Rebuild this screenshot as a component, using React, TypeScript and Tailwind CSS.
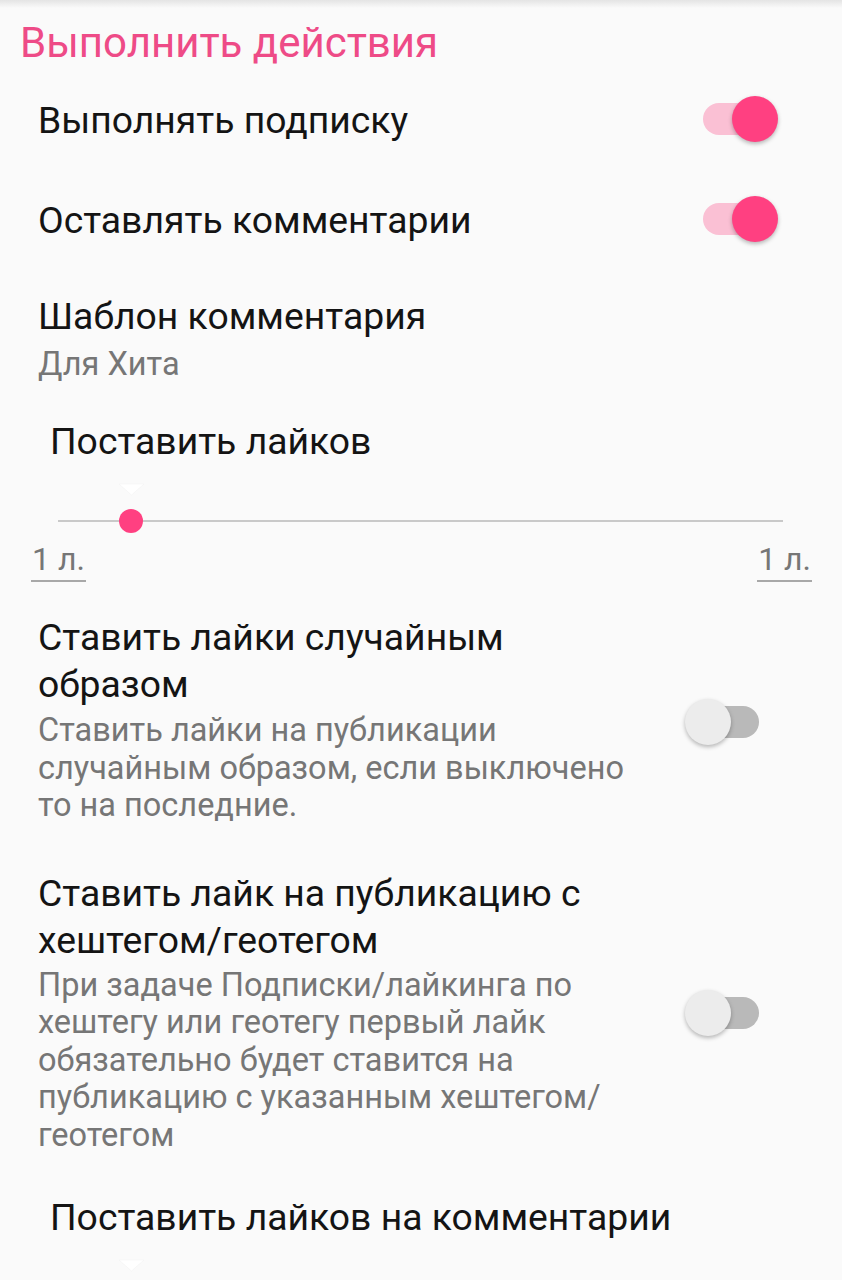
import React from "react";

function Switch({ on }: { on: boolean }) {
  return (
    <div
      className={
        "relative w-[56px] h-[32px] rounded-full shrink-0 " +
        (on ? "bg-[#fac0d4]" : "bg-[#b9b9b9]")
      }
    >
      <div
        className={
          "absolute top-[-7px] w-[46px] h-[46px] rounded-full shadow-[0_2px_4px_rgba(0,0,0,0.28)] " +
          (on ? "left-[29px] bg-[#ff4081]" : "left-[-18px] bg-[#ececec]")
        }
      />
    </div>
  );
}

function Slider() {
  return (
    <svg width="842" height="76" viewBox="0 0 842 76" className="block">
      <polygon points="119,20 144,20 131.5,31" fill="#ffffff" stroke="#f0f0f0" strokeWidth="0.5" />
      <line x1="58" y1="57" x2="783" y2="57" stroke="#c9c9c9" strokeWidth="2" />
      <circle cx="131" cy="57" r="12" fill="#ff4081" />
    </svg>
  );
}

function Label({ text }: { text: string }) {
  return (
    <span className="inline-block text-[32px] leading-[36px] text-[#767676] pb-[3px] px-[1px] border-b-[2px] border-[#a8a8a8]">
      {text}
    </span>
  );
}

export default function App() {
  return (
    <div className="relative w-[842px] h-[1280px] overflow-hidden bg-[#fafafa] font-['Roboto',sans-serif]">
      <div className="absolute top-0 left-0 w-full h-[8px] bg-gradient-to-b from-[#e4e4e4] to-transparent" />
      <div className="flex flex-col">
        {/* Category */}
        <div className="pt-[19px] pl-[20px] text-[42px] leading-[48px] text-[#ee4b87]">
          Выполнить действия
        </div>

        {/* Switch rows */}
        <div className="mt-[3px] h-[100px] flex items-center justify-between pl-[38px] pr-[83px]">
          <div className="text-[37.3px] leading-[46px] text-[#141414]">Выполнять подписку</div>
          <div className="-mt-[2px]">
            <Switch on={true} />
          </div>
        </div>
        <div className="h-[100px] flex items-center justify-between pl-[38px] pr-[83px]">
          <div className="text-[37.3px] leading-[46px] text-[#141414]">Оставлять комментарии</div>
          <div className="-mt-[2px]">
            <Switch on={true} />
          </div>
        </div>

        {/* Template */}
        <div className="pt-[23px] pl-[38px]">
          <div className="text-[37.3px] leading-[46px] text-[#141414]">Шаблон комментария</div>
          <div className="mt-[6px] text-[32.5px] leading-[38px] text-[#767676]">Для Хита</div>
        </div>

        {/* Likes slider */}
        <div className="mt-[35px] pl-[50px] text-[37.3px] leading-[46px] text-[#141414]">
          Поставить лайков
        </div>
        <Slider />
        <div className="mt-[1px] flex justify-between pl-[31px] pr-[30px]">
          <Label text="1 л." />
          <Label text="1 л." />
        </div>

        {/* Random likes */}
        <div className="mt-[32px] flex items-center justify-between pl-[38px] pr-[83px]">
          <div className="w-[606px]">
            <div className="text-[37.3px] leading-[47px] text-[#141414]">
              Ставить лайки случайным
              <br />
              образом
            </div>
            <div className="mt-[4px] text-[32.5px] leading-[37.5px] text-[#767676]">
              Ставить лайки на публикации
              <br />
              случайным образом, если выключено
              <br />
              то на последние.
            </div>
          </div>
          <div className="mt-[5px]">
            <Switch on={false} />
          </div>
        </div>

        {/* Hashtag likes */}
        <div className="mt-[45px] flex items-center justify-between pl-[38px] pr-[83px]">
          <div className="w-[606px]">
            <div className="text-[37.3px] leading-[47px] text-[#141414]">
              Ставить лайк на публикацию с
              <br />
              хештегом/геотегом
            </div>
            <div className="mt-[3px] text-[32.5px] leading-[37.5px] text-[#767676]">
              При задаче Подписки/лайкинга по
              <br />
              хештегу или геотегу первый лайк
              <br />
              обязательно будет ставится на
              <br />
              публикацию с указанным хештегом/
              <br />
              геотегом
            </div>
          </div>
          <div className="mt-[2px]">
            <Switch on={false} />
          </div>
        </div>

        {/* Likes on comments */}
        <div className="mt-[40px] pl-[50px] text-[37.3px] leading-[46px] text-[#141414]">
          Поставить лайков на комментарии
        </div>
        <Slider />
      </div>
    </div>
  );
}
